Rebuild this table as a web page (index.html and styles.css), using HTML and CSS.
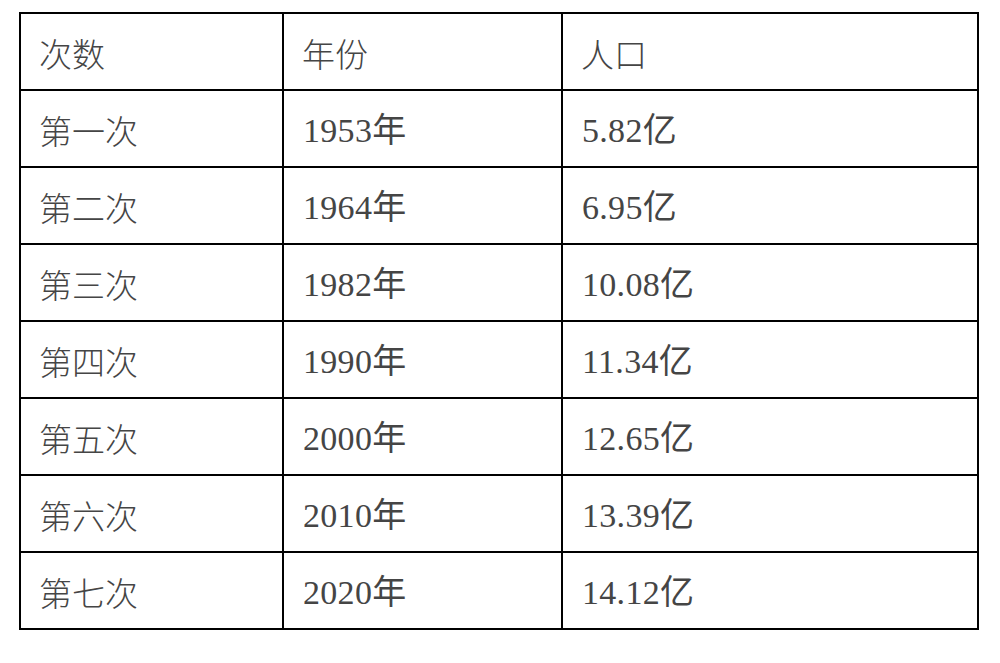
FILE: index.html
```html
<!DOCTYPE html>
<html lang="zh">
<head>
<meta charset="utf-8">
<title>人口普查</title>
<link rel="stylesheet" href="styles.css">
</head>
<body>
<table class="census">
  <colgroup>
    <col class="c1"><col class="c2"><col class="c3">
  </colgroup>
  <tr><td>次数</td><td>年份</td><td>人口</td></tr>
  <tr><td>第一次</td><td class="num">1953年</td><td class="num">5.82亿</td></tr>
  <tr><td>第二次</td><td class="num">1964年</td><td class="num">6.95亿</td></tr>
  <tr><td>第三次</td><td class="num">1982年</td><td class="num">10.08亿</td></tr>
  <tr><td>第四次</td><td class="num">1990年</td><td class="num">11.34亿</td></tr>
  <tr><td>第五次</td><td class="num">2000年</td><td class="num">12.65亿</td></tr>
  <tr><td>第六次</td><td class="num">2010年</td><td class="num">13.39亿</td></tr>
  <tr><td>第七次</td><td class="num">2020年</td><td class="num">14.12亿</td></tr>
</table>
</body>
</html>
```

FILE: styles.css
```css
html, body {
  margin: 0;
  padding: 0;
  background: #ffffff;
}
body {
  padding: 12px 0 0 19px;
  font-family: "Noto Sans CJK SC", "Noto Sans", sans-serif;
  color: #454545;
}
.census {
  border-collapse: collapse;
  width: 958px;
  table-layout: fixed;
  border: 2px solid #000;
}
.c1 { width: 263px; }
.c2 { width: 279px; }
.c3 { width: 416px; }
.census tr {
  height: 77px;
}
.census td {
  border: 2px solid #000;
  padding: 4px 0 0 18px;
  font-size: 33px;
  font-weight: 300;
  line-height: 1;
  vertical-align: middle;
  white-space: nowrap;
}
.census td.num {
  font-family: "Liberation Serif", "Noto Sans CJK SC", serif;
  font-size: 34px;
  font-weight: 400;
  padding-left: 19px;
  letter-spacing: 0.3px;
}
```
